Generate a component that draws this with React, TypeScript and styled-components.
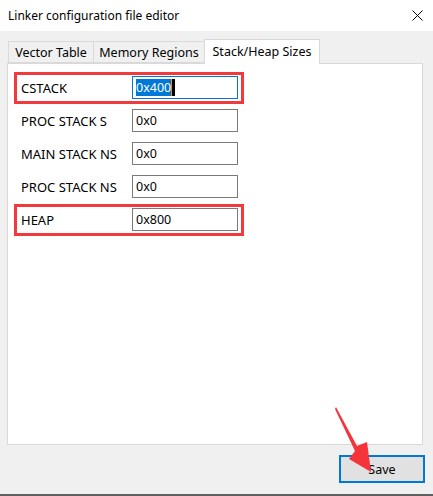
import React from "react";
import styled, { createGlobalStyle } from "styled-components";

const Global = createGlobalStyle`
  html, body { margin: 0; padding: 0; background: #f0f0f0; }
  body { font-family: "Noto Sans", "Liberation Sans", sans-serif; font-size: 12px; color: #000; }
`;

const Window = styled.div`
  position: relative;
  width: 433px;
  height: 496px;
  box-sizing: border-box;
  background: #f0f0f0;
  display: flex;
  flex-direction: column;
  border-bottom: 2px solid #5f5f5f;
  overflow: hidden;
`;

const TitleBar = styled.div`
  height: 31px;
  flex: none;
  background: #fff;
  display: flex;
  align-items: center;
  justify-content: space-between;
  padding: 0 10px 0 8px;
  font-size: 12px;
`;

const Body = styled.div`
  flex: 1;
  display: flex;
  flex-direction: column;
  padding: 9px 11px 0 7px;
`;

const TabStrip = styled.div`
  height: 24px;
  display: flex;
  align-items: flex-end;
  padding-left: 1px;
  position: relative;
  z-index: 1;
  margin-bottom: -1px;
`;

const Tab = styled.div<{ $active?: boolean; $w: number }>`
  box-sizing: border-box;
  width: ${(p) => p.$w}px;
  height: ${(p) => (p.$active ? 25 : 22)}px;
  background: ${(p) => (p.$active ? "#fff" : "#f0f0f0")};
  border: 1px solid #d9d9d9;
  border-bottom: ${(p) => (p.$active ? "none" : "1px solid #d9d9d9")};
  margin-left: -1px;
  display: flex;
  align-items: ${(p) => (p.$active ? "flex-start" : "center")};
  padding-top: ${(p) => (p.$active ? "3px" : "0")};
  justify-content: center;
  white-space: nowrap;
  font-size: 12.5px;
  align-self: flex-end;
  margin-bottom: ${(p) => (p.$active ? "0" : "1px")};
`;

const Panel = styled.div`
  box-sizing: border-box;
  width: 416px;
  height: 382px;
  background: #fff;
  border: 1px solid #d9d9d9;
  padding: 12px 0 0 13px;
  display: flex;
  flex-direction: column;
  gap: 10px;
`;

const Row = styled.div<{ $marked?: boolean }>`
  position: relative;
  display: flex;
  align-items: center;
  height: 23px;
  &::before {
    content: "";
    display: ${(p) => (p.$marked ? "block" : "none")};
    position: absolute;
    left: -7px;
    top: -4px;
    width: 230px;
    height: 32px;
    box-sizing: border-box;
    border: 3px solid #f23a3c;
  }
`;

const Label = styled.div`
  width: 111px;
  font-size: 13px;
`;

const Field = styled.div<{ $focused?: boolean }>`
  box-sizing: border-box;
  width: 106px;
  height: 23px;
  border: 1px solid ${(p) => (p.$focused ? "#0078d7" : "#7a7a7a")};
  background: #fff;
  display: flex;
  align-items: center;
  padding-left: 3px;
  font-size: 12.5px;
`;

const Selected = styled.span`
  background: #0078d7;
  color: #fff;
  line-height: 17px;
`;

const Caret = styled.span`
  display: inline-block;
  width: 3px;
  height: 17px;
  background: #000;
  border-left: 1px solid #ff8a00;
`;

const Footer = styled.div`
  flex: 1;
  display: flex;
  justify-content: flex-end;
  align-items: flex-start;
  padding-top: 10px;
  margin-right: -3px;
`;

const SaveButton = styled.div`
  box-sizing: border-box;
  width: 86px;
  height: 28px;
  border: 2px solid #0078d7;
  background: #e1e1e1;
  display: flex;
  align-items: center;
  justify-content: center;
  font-size: 12.5px;
`;

const Arrow = styled.svg`
  position: absolute;
  left: 0;
  top: 0;
  pointer-events: none;
`;

const rows = [
  { label: "CSTACK", value: "0x400", marked: true, focused: true },
  { label: "PROC STACK S", value: "0x0" },
  { label: "MAIN STACK NS", value: "0x0" },
  { label: "PROC STACK NS", value: "0x0" },
  { label: "HEAP", value: "0x800", marked: true },
];

export default function App() {
  return (
    <>
      <Global />
      <Window>
        <TitleBar>
          <span>Linker configuration file editor</span>
          <svg width="11" height="11" viewBox="0 0 11 11">
            <path d="M0.5 0.5 L10.5 10.5 M10.5 0.5 L0.5 10.5" stroke="#000" strokeWidth="1" />
          </svg>
        </TitleBar>
        <Body>
          <TabStrip>
            <Tab $w={86} style={{ marginLeft: 0 }}>Vector Table</Tab>
            <Tab $w={112}>Memory Regions</Tab>
            <Tab $w={116} $active>Stack/Heap Sizes</Tab>
          </TabStrip>
          <Panel>
            {rows.map((r) => (
              <Row key={r.label} $marked={r.marked}>
                <Label>{r.label}</Label>
                <Field $focused={r.focused}>
                  {r.focused ? (
                    <>
                      <Selected>{r.value}</Selected>
                      <Caret />
                    </>
                  ) : (
                    r.value
                  )}
                </Field>
              </Row>
            ))}
          </Panel>
          <Footer>
            <SaveButton>Save</SaveButton>
          </Footer>
        </Body>
        <Arrow width="433" height="496" viewBox="0 0 433 496">
          <polygon
            points="336,407 357,446 367,442 371,472 349,459 355,451 335,409"
            fill="#f5333a"
          />
        </Arrow>
      </Window>
    </>
  );
}
